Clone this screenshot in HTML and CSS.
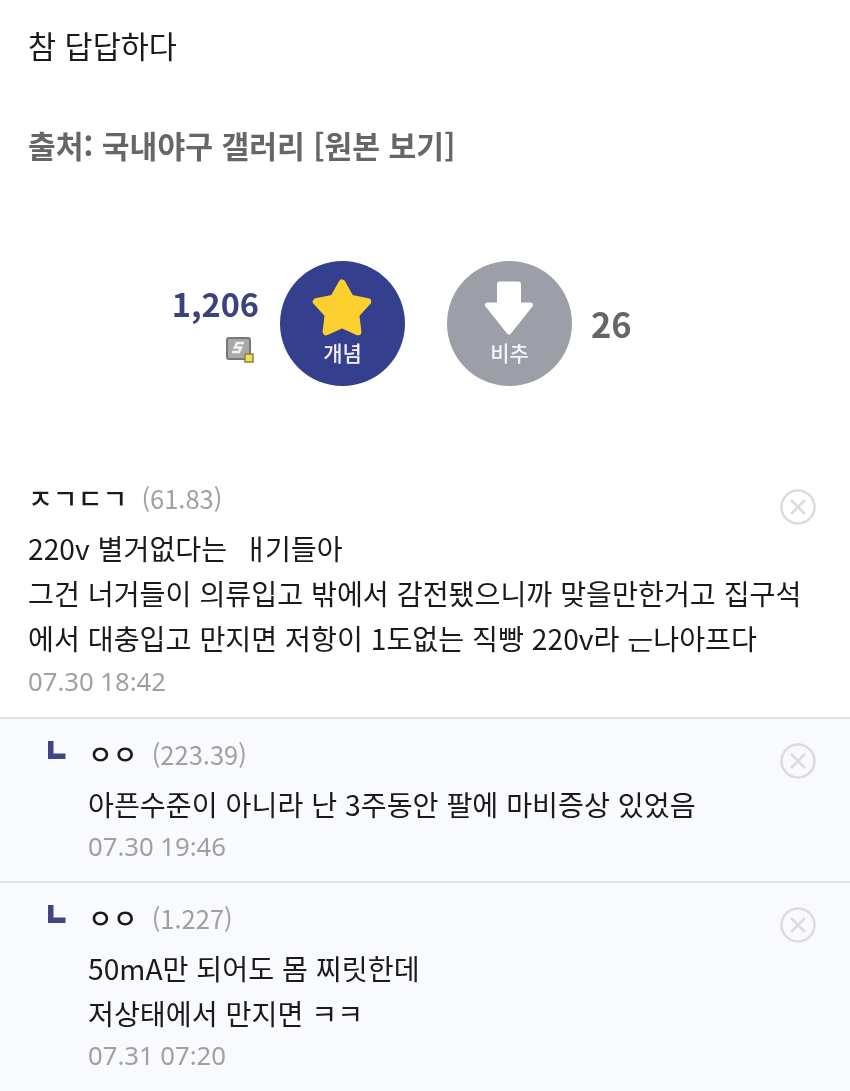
FILE: index.html
```html
<!DOCTYPE html>
<html lang="ko">
<head>
    <meta charset="UTF-8">
    <meta name="viewport" content="width=device-width, initial-scale=1.0">
    <title>참 답답하다</title>
    <link rel="stylesheet" href="styles.css">
</head>
<body>
    <section class="post">
        <h1 class="post-text">참 답답하다</h1>
        <p class="post-source">출처: 국내야구 갤러리 [원본 보기]</p>
    </section>

    <section class="vote">
        <div class="vote-side vote-side-left">
            <strong class="count count-up">1,206</strong>
            <svg class="fix-icon" viewBox="0 0 28 28" aria-hidden="true">
                <rect x="1" y="2" width="23" height="21" rx="2" fill="#a9a9a9" stroke="#777" stroke-width="2"/>
                <path d="M18 7h-7l-2 4.500h6l-2 4.500h-7" fill="none" stroke="#f2f2f2" stroke-width="2.500"/>
                <rect x="19" y="18" width="8" height="8" fill="#ecdf62" stroke="#8b8431" stroke-width="1.5"/>
            </svg>
        </div>
        <button class="vote-btn vote-up" type="button">
            <svg class="vote-icon" viewBox="0 0 62 60" aria-hidden="true">
                <path d="M31 5L39.500 20.300 56.700 23.700 44.800 36.500 46.900 53.800 31 46.500 15.100 53.800 17.200 36.500 5.300 23.700 22.500 20.300z" fill="#fdd02f" stroke="#fdd02f" stroke-width="7" stroke-linejoin="round"/>
            </svg>
            <span>개념</span>
        </button>
        <button class="vote-btn vote-down" type="button">
            <svg class="vote-icon" viewBox="0 0 62 60" aria-hidden="true">
                <path d="M21.500 6h19v21h12l-21.500 27-21.500-27h12z" fill="#fff" stroke="#fff" stroke-width="5" stroke-linejoin="round"/>
            </svg>
            <span>비추</span>
        </button>
        <div class="vote-side">
            <strong class="count count-down">26</strong>
        </div>
    </section>

    <section class="comments">
        <article class="comment">
            <div class="comment-body">
                <div class="comment-head"><span class="nick">ㅈㄱㄷㄱ</span> <span class="ip">(61.83)</span></div>
                <p class="comment-text">220v 별거없다는 &nbsp;<span class="censor">ㅐ</span>기들아<br>그건 너거들이 의류입고 밖에서 감전됐으니까 맞을만한거고 집구석<br>에서 대충입고 만지면 저항이 1도없는 직빵 220v라 ᅟᅳᆫ나아프다</p>
                <div class="comment-date">07.30 18:42</div>
            </div>
            <button class="del-btn" type="button" aria-label="삭제">
                <svg viewBox="0 0 36 36"><circle cx="18" cy="18" r="16.500"/><path d="M11 11l14 14M25 11l-14 14"/></svg>
            </button>
        </article>

        <article class="comment reply">
            <svg class="reply-mark" viewBox="0 0 18 18" aria-hidden="true"><path d="M0 0h5.500v12.500h12v5.500h-17.500z"/></svg>
            <div class="comment-body">
                <div class="comment-head"><span class="nick">ㅇㅇ</span> <span class="ip">(223.39)</span></div>
                <p class="comment-text">아픈수준이 아니라 난 3주동안 팔에 마비증상 있었음</p>
                <div class="comment-date">07.30 19:46</div>
            </div>
            <button class="del-btn" type="button" aria-label="삭제">
                <svg viewBox="0 0 36 36"><circle cx="18" cy="18" r="16.500"/><path d="M11 11l14 14M25 11l-14 14"/></svg>
            </button>
        </article>

        <article class="comment reply">
            <svg class="reply-mark" viewBox="0 0 18 18" aria-hidden="true"><path d="M0 0h5.500v12.500h12v5.500h-17.500z"/></svg>
            <div class="comment-body">
                <div class="comment-head"><span class="nick">ㅇㅇ</span> <span class="ip">(1.227)</span></div>
                <p class="comment-text">50mA만 되어도 몸 찌릿한데<br>저상태에서 만지면 ㅋㅋ</p>
                <div class="comment-date">07.31 07:20</div>
            </div>
            <button class="del-btn" type="button" aria-label="삭제">
                <svg viewBox="0 0 36 36"><circle cx="18" cy="18" r="16.500"/><path d="M11 11l14 14M25 11l-14 14"/></svg>
            </button>
        </article>
    </section>
</body>
</html>
```

FILE: styles.css
```css
html {
    background-color: #ffffff;
}
body {
    margin: 0;
    background-color: #ffffff;
    color: #1a1a1a;
    font-family: "Noto Sans CJK KR", "Noto Sans", sans-serif;
    filter: blur(0.35px);
    overflow: hidden;
}

.post {
    padding: 23px 28px 0;
}
.post-text {
    margin: 0;
    font-size: 30.5px;
    font-weight: 400;
    line-height: 44px;
}
.post-source {
    margin: 56px 0 0;
    color: #666666;
    font-size: 30.2px;
    font-weight: 700;
    line-height: 44px;
}

.vote {
    display: grid;
    grid-template-columns: 1fr 125px 125px 1fr;
    column-gap: 42px;
    margin: 94px 0 78px;
    padding-left: 2px;
}
.vote-side {
    display: flex;
    flex-direction: column;
    justify-content: center;
}
.vote-side-left {
    align-items: flex-end;
    margin-right: -21px;
}
.count {
    font-size: 32.5px;
    line-height: 44px;
}
.count-up {
    margin-top: -2px;
    color: #3b4282;
}
.count-down {
    margin: -1px 0 0 -23px;
    font-size: 34.5px;
    color: #666666;
}
.fix-icon {
    width: 28px;
    height: 28px;
    margin: 11px 5px 0 0;
}

.vote-btn {
    display: flex;
    flex-direction: column;
    align-items: center;
    width: 125px;
    height: 125px;
    padding: 17px 0 0;
    border: none;
    border-radius: 50%;
    color: #f4f4f8;
    font-family: inherit;
    font-size: 21px;
    font-weight: 500;
    line-height: 26px;
}
.vote-up {
    background-color: #343f8e;
}
.vote-down {
    background-color: #9c9ea8;
}
.vote-icon {
    width: 62px;
    height: 60px;
    margin: 0 0 1px -2px;
}

.comment {
    position: relative;
    display: flex;
    align-items: flex-start;
    padding: 14px 0 15px 28px;
    border-bottom: 2px solid #dfe1e8;
}
.comment:last-child {
    padding-bottom: 16px;
    border-bottom: none;
}
.comment-body {
    flex: 1;
}
.comment-head {
    height: 40px;
    font-size: 25px;
    line-height: 40px;
}
.nick {
    font-size: 27px;
    font-weight: 500;
}
.ip {
    margin-left: 7px;
    color: #a0a0a0;
    font-size: 25.5px;
}
.comment-text {
    margin: 7px 0 2px;
    font-size: 28.2px;
    line-height: 45px;
    white-space: nowrap;
}
.censor {
    letter-spacing: -4px;
}
.comment-date {
    color: #a0a0a0;
    font-family: "Noto Sans", sans-serif;
    font-size: 25.7px;
    line-height: 40px;
}

.reply {
    background-color: #f9fafd;
    padding: 15px 0 14px 48px;
}
.reply .comment-text {
    margin-bottom: 1px;
}
.reply-mark {
    flex: none;
    width: 18px;
    height: 18px;
    margin: 7px 22px 0 0;
    fill: #3f4680;
}

.del-btn {
    position: absolute;
    top: 25px;
    right: 34px;
    width: 36px;
    height: 36px;
    padding: 0;
    border: none;
    background: none;
}
.reply .del-btn {
    top: 24px;
}
.del-btn svg {
    display: block;
    fill: none;
    stroke: #dcdcdc;
    stroke-width: 2.5;
}
```
